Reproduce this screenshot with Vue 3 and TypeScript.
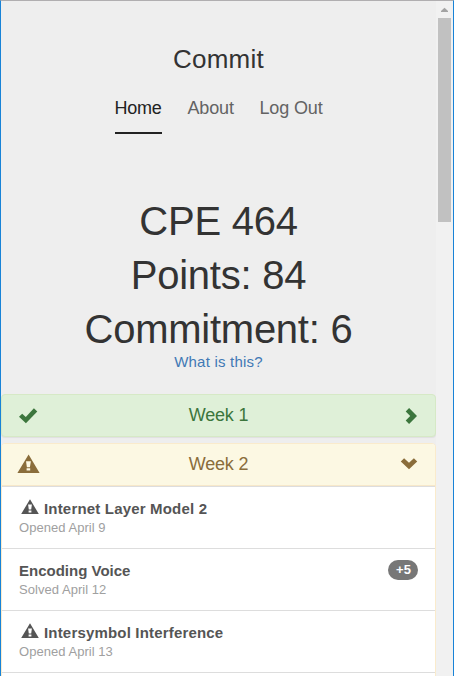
<script setup lang="ts">
interface Problem {
  title: string
  detail: string
  warning?: boolean
  points?: string
}

const links: { label: string; active?: boolean; cls: string }[] = [
  { label: 'Home', active: true, cls: 'home' },
  { label: 'About', cls: 'about' },
  { label: 'Log Out', cls: 'logout' },
]

const problems: Problem[] = [
  { title: 'Internet Layer Model 2', detail: 'Opened April 9', warning: true },
  { title: 'Encoding Voice', detail: 'Solved April 12', points: '+5' },
  { title: 'Intersymbol Interference', detail: 'Opened April 13', warning: true },
]
</script>

<template>
  <div class="window">
    <main class="page">
      <h3 class="brand">Commit</h3>
      <nav class="nav">
        <a v-for="l in links" :key="l.label" class="nav-link" :class="[l.cls, { active: l.active }]">{{ l.label }}</a>
      </nav>
      <header class="summary">
        <h1 class="course">CPE 464</h1>
        <h1 class="points">Points: 84</h1>
        <h1 class="commitment">Commitment: 6</h1>
        <a class="help">What is this?</a>
      </header>

      <section class="panel success">
        <div class="heading">
          <svg width="22" height="21" viewBox="0 0 22 21"><path d="M1 11.8 L4.2 8.7 L7.8 12 L15.9 3.3 L19.3 6.5 L7.9 18.2 Z" /></svg>
          <span>Week 1</span>
          <svg width="22" height="21" viewBox="0 0 22 21"><path d="M12.1 3 L20 10.9 L12.1 18.9 L8.7 15.5 L13.2 10.9 L8.7 6.4 Z" /></svg>
        </div>
      </section>

      <section class="panel warning">
        <div class="heading">
          <svg width="22" height="21" viewBox="0 0 22 21"><path fill-rule="evenodd" d="M10.6 0.4 L21.6 19 H-0.6 Z M8 7.2 L8.9 13.2 H11.9 L12.9 7.2 Z M8.6 14.2 V16.5 H12.2 V14.2 Z" /></svg>
          <span>Week 2</span>
          <svg width="22" height="21" viewBox="0 0 22 21"><path d="M3.8 7.6 L7.1 4.3 L12 8.7 L16.9 4.3 L20.2 7.6 L12 15.2 Z" /></svg>
        </div>
        <ul class="list">
          <li v-for="p in problems" :key="p.title" class="item">
            <div>
              <div class="title">
                <svg v-if="p.warning" width="18" height="16" viewBox="0 0 18 16"><path fill-rule="evenodd" d="M9 0.2 L17.8 15 H0.2 Z M7.1 5.6 L7.8 10.6 H10.2 L10.9 5.6 Z M7.6 11.6 V13.4 H10.4 V11.6 Z" /></svg>
                <span :class="{ flagged: p.warning }">{{ p.title }}</span>
              </div>
              <div class="detail">{{ p.detail }}</div>
            </div>
            <span v-if="p.points" class="badge">{{ p.points }}</span>
          </li>
        </ul>
      </section>
    </main>
    <aside class="scrollbar">
      <svg width="17" height="17" viewBox="0 0 17 17"><path d="M5 11 V10 L8.5 6.8 L12 10 V11 Z" /></svg>
      <div class="thumb"></div>
    </aside>
  </div>
</template>

<style>
body {
  margin: 0;
  overflow: hidden;
}
</style>

<style scoped>
.window {
  box-sizing: border-box;
  width: 454px;
  height: 676px;
  display: flex;
  overflow: hidden;
  border-top: 1px solid #b0aeb0;
  border-left: 1px solid #1883d7;
  border-right: 1px solid #1883d7;
  background: #eee;
  color: #333;
  font-family: "Liberation Sans", Arial, sans-serif;
}
.page {
  width: 435px;
  flex: none;
  text-align: center;
}
.brand {
  margin: 43px 0 0;
  font-size: 26px;
  line-height: 30px;
  font-weight: 400;
  letter-spacing: 0.2px;
}
.nav {
  display: flex;
  justify-content: center;
  gap: 26px;
  margin-top: 21px;
}
.nav-link {
  box-sizing: border-box;
  height: 39px;
  font-size: 18px;
  line-height: 27px;
  color: #636363;
  white-space: nowrap;
  border-bottom: 2px solid transparent;
}
.active {
  color: #222;
  border-color: #222;
}
.home {
  width: 47px;
  letter-spacing: -0.25px;
}
.about {
  width: 46px;
  letter-spacing: -0.15px;
}
.logout {
  width: 63px;
  letter-spacing: -0.15px;
}
.summary {
  margin-top: 60px;
  height: 200px;
}
.summary h1 {
  margin: 0;
  font-size: 40px;
  line-height: 54px;
  font-weight: 400;
  letter-spacing: -0.25px;
}
.help {
  display: block;
  margin-top: -4px;
  font-size: 15px;
  line-height: 20px;
  letter-spacing: 0.22px;
  color: #4179b5;
}
.panel {
  box-sizing: border-box;
  border: 1px solid #d6e9c6;
  border-radius: 4px;
  box-shadow: 0 1px 1px rgba(0, 0, 0, 0.06);
}
.heading {
  display: flex;
  align-items: center;
  justify-content: space-between;
  height: 41px;
  padding: 0 16px;
  font-size: 18px;
  border-radius: 3px 3px 0 0;
}
.heading span {
  margin-bottom: 1px;
  line-height: 20px;
  letter-spacing: -0.2px;
}
.heading svg {
  fill: currentColor;
  overflow: visible;
}
.success {
  background: #dff0d8;
  color: #3c763d;
}
.warning {
  margin-top: 6px;
  border-color: #faebcc;
  background: #fff;
  color: #8a6d3b;
}
.warning .heading {
  height: 42px;
  border-bottom: 1px solid #f7e8ca;
  background: #fcf8e3;
  box-sizing: border-box;
}
.list {
  margin: 0;
  padding: 0 0 12px;
  list-style: none;
  text-align: left;
}
.item {
  box-sizing: border-box;
  height: 62px;
  display: flex;
  justify-content: space-between;
  padding: 11px 17px 0;
  border-top: 1px solid #ddd;
}
.item:last-child {
  height: 63px;
  border-bottom: 1px solid #ddd;
}
.title {
  height: 21px;
  display: flex;
  color: #555;
  font-size: 15px;
  line-height: 21px;
  font-weight: 700;
}
.title svg {
  margin: 1px 5px 0 2px;
  fill: currentColor;
}
.flagged {
  letter-spacing: 0.18px;
}
.detail {
  color: #a0a0a0;
  font-size: 13px;
  line-height: 17px;
  letter-spacing: 0.04px;
}
.badge {
  box-sizing: border-box;
  width: 30px;
  height: 20px;
  padding-left: 1px;
  border-radius: 10px;
  background: #777;
  color: #fff;
  font-size: 13px;
  line-height: 20px;
  font-weight: 700;
  text-align: center;
}
.scrollbar {
  width: 17px;
  flex: none;
  display: flex;
  flex-direction: column;
  align-items: center;
  background: #f1f1f1;
}
.scrollbar svg {
  fill: #a3a3a3;
}
.thumb {
  width: 13px;
  height: 204px;
  background: #c1c1c1;
}
</style>
